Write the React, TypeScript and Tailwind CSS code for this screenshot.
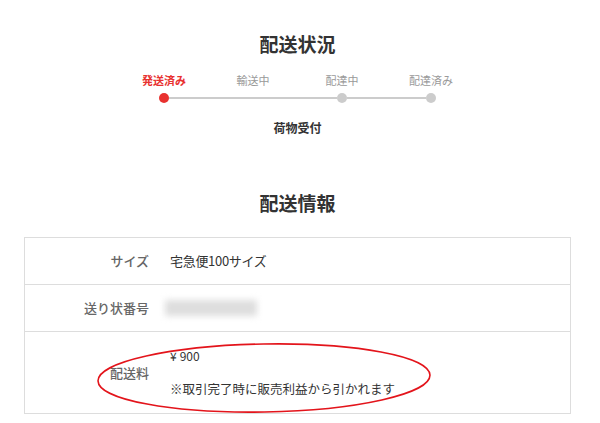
import React from "react";

const font = { fontFamily: '"Noto Sans CJK JP", "Noto Sans", sans-serif' };

export default function App() {
  const steps = ["発送済み", "輸送中", "配達中", "配達済み"];
  return (
    <div className="relative w-[600px] h-[423px] bg-white overflow-hidden" style={font}>
      <div className="w-[595px] flex flex-col items-center pt-[30px]">
        <h2 className="text-[19px] leading-[28px] font-bold text-[#333]">配送状況</h2>
        <div className="mt-[14px] flex">
          {steps.map((s, i) => (
            <div
              key={s}
              className={`w-[89px] text-center text-[11px] leading-[16px] ${i === 0 ? "text-[#e8312f] font-bold" : "text-[#999]"}`}
            >
              {s}
            </div>
          ))}
        </div>
        <div className="mt-[5px] flex items-center w-[277px]">
          <div className="w-[10px] h-[10px] rounded-full bg-[#e8312f]" />
          <div className="w-[168px] h-[2px] bg-[#cccccc]" />
          <div className="w-[10px] h-[10px] rounded-full bg-[#cccccc]" />
          <div className="w-[79px] h-[2px] bg-[#cccccc]" />
          <div className="w-[10px] h-[10px] rounded-full bg-[#cccccc]" />
        </div>
        <div className="mt-[16px] text-[12px] leading-[18px] font-bold text-[#333]">荷物受付</div>
        <h2 className="mt-[52px] text-[19px] leading-[28px] font-bold text-[#333]">配送情報</h2>
        <div className="mt-[20px] w-[547px] border border-[#dddddd]">
          <div className="flex items-center h-[47px] border-b border-[#dddddd]">
            <div className="w-[124px] text-right text-[13px] font-medium text-[#666]">サイズ</div>
            <div className="pl-[21px] text-[13px] text-[#333] tracking-[-0.3px]">宅急便100サイズ</div>
          </div>
          <div className="flex items-center h-[47px] border-b border-[#dddddd]">
            <div className="w-[124px] text-right text-[13px] font-medium text-[#666]">送り状番号</div>
            <div className="ml-[16px] w-[92px] h-[16px] bg-[#dedede] blur-[3px]" />
          </div>
          <div className="flex items-center h-[81px]">
            <div className="w-[124px] text-right text-[13px] font-medium text-[#666]">配送料</div>
            <div className="pl-[21px] h-full flex flex-col pt-[15px]">
              <div className="text-[12px] leading-[18px] text-[#333]">
                <span className="mr-[3px]">¥</span>900
              </div>
              <div className="mt-[15px] text-[12.5px] leading-[18px] text-[#333]">※取引完了時に販売利益から引かれます</div>
            </div>
          </div>
        </div>
      </div>
      <svg className="absolute top-0 left-0 pointer-events-none" width="600" height="423">
        <ellipse cx="264" cy="378" rx="166" ry="34" fill="none" stroke="#e3141b" strokeWidth="1.6" transform="rotate(-1 264 378)" />
      </svg>
    </div>
  );
}
